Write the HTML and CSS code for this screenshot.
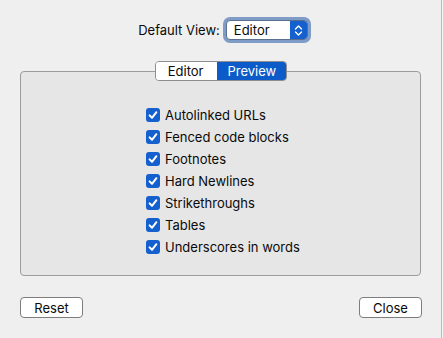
FILE: index.html
```html
<!DOCTYPE html>
<html lang="en-us">
  <head>
    <meta charset="utf-8" />
    <title>Preferences</title>
    <link rel="stylesheet" href="styles.css">
  </head>
  <body>
    <div class="window">
      <div class="header">
        <span class="label">Default View:</span>
        <div class="popup-ring">
          <div class="popup">
            <span class="popup-value">Editor</span>
            <span class="popup-arrows">
              <svg width="9" height="13" viewBox="0 0 9 13">
                <path d="M1.5 5 L4.5 2 L7.5 5 M1.5 8 L4.5 11 L7.5 8" fill="none" stroke="#fff" stroke-width="1.4" stroke-linecap="round" stroke-linejoin="round"/>
              </svg>
            </span>
          </div>
        </div>
      </div>

      <div class="group">
        <div class="tabs">
          <div class="tab">Editor</div>
          <div class="tab selected">Preview</div>
        </div>
        <ul class="options">
          <li><span class="check"></span>Autolinked URLs</li>
          <li><span class="check"></span>Fenced code blocks</li>
          <li><span class="check"></span>Footnotes</li>
          <li><span class="check"></span>Hard Newlines</li>
          <li><span class="check"></span>Strikethroughs</li>
          <li><span class="check"></span>Tables</li>
          <li><span class="check"></span>Underscores in words</li>
        </ul>
      </div>

      <div class="footer">
        <button class="btn">Reset</button>
        <button class="btn">Close</button>
      </div>
    </div>
    <div class="edge"></div>
  </body>
</html>
```

FILE: styles.css
```css
body {
  margin: 0;
  padding: 0;
  width: 443px;
  height: 338px;
  display: flex;
  background-color: #f6f6f6;
  font-family: Inter, "Noto Sans", sans-serif;
  font-size: 13px;
  color: #0a0a0a;
  overflow: hidden;
}

.window {
  width: 441px;
  height: 338px;
  background-color: #efefef;
  border-right: 1px solid #b8b8b8;
  display: flex;
  flex-direction: column;
}

.edge {
  flex: 1;
}

.header {
  display: flex;
  align-items: center;
  justify-content: center;
  gap: 3px;
  margin-top: 17px;
  padding-left: 8px;
  height: 26px;
}

.popup-ring {
  padding: 3px;
  border-radius: 7px;
  background-color: #7f9cc6;
}

.popup {
  display: flex;
  width: 82px;
  height: 20px;
  border-radius: 4px;
  background-color: #fff;
  border: 1px solid #5b6f90;
  overflow: hidden;
  box-sizing: border-box;
}

.popup-value {
  flex: 1;
  padding-left: 7px;
  line-height: 18px;
}

.popup-arrows {
  width: 17px;
  background-color: #1560cf;
  display: flex;
  align-items: center;
  justify-content: center;
}

.group {
  margin: 28px 0 0 20px;
  width: 401px;
  height: 205px;
  box-sizing: border-box;
  border: 1px solid #9c9c9c;
  border-radius: 4px;
  background-color: #e6e6e6;
  display: flex;
  flex-direction: column;
}

.tabs {
  display: flex;
  align-self: center;
  margin-top: -11px;
  margin-left: 1px;
  height: 20px;
  border: 1px solid #8e8e8e;
  border-radius: 4px;
  overflow: hidden;
  box-sizing: border-box;
}

.tab {
  background-color: #fff;
  line-height: 18px;
  padding: 0 13px 0 12px;
}

.tab.selected {
  background-color: #0c5bc8;
  color: #fff;
  padding: 0 10px 0 11px;
}

.options {
  list-style: none;
  margin: 23px 0 0 125px;
  padding: 0;
}

.options li {
  height: 22px;
  display: flex;
  align-items: center;
  gap: 5px;
}

.check {
  width: 14px;
  height: 14px;
  border-radius: 3px;
  background-color: #1560cf;
  background-image: url("data:image/svg+xml,%3Csvg xmlns='http://www.w3.org/2000/svg' width='14' height='14' viewBox='0 0 14 14'%3E%3Cpath d='M3.6 7.4 L6 9.8 L10.4 4.2' fill='none' stroke='white' stroke-width='2' stroke-linecap='round' stroke-linejoin='round'/%3E%3C/svg%3E");
}

.footer {
  display: flex;
  justify-content: space-between;
  margin: 21px 19px 0 20px;
}

.btn {
  font-family: inherit;
  font-size: 13px;
  color: #0a0a0a;
  width: 63px;
  height: 21px;
  padding: 0;
  background-color: #fff;
  border: 1px solid #7d7d7d;
  border-radius: 4px;
}
```
